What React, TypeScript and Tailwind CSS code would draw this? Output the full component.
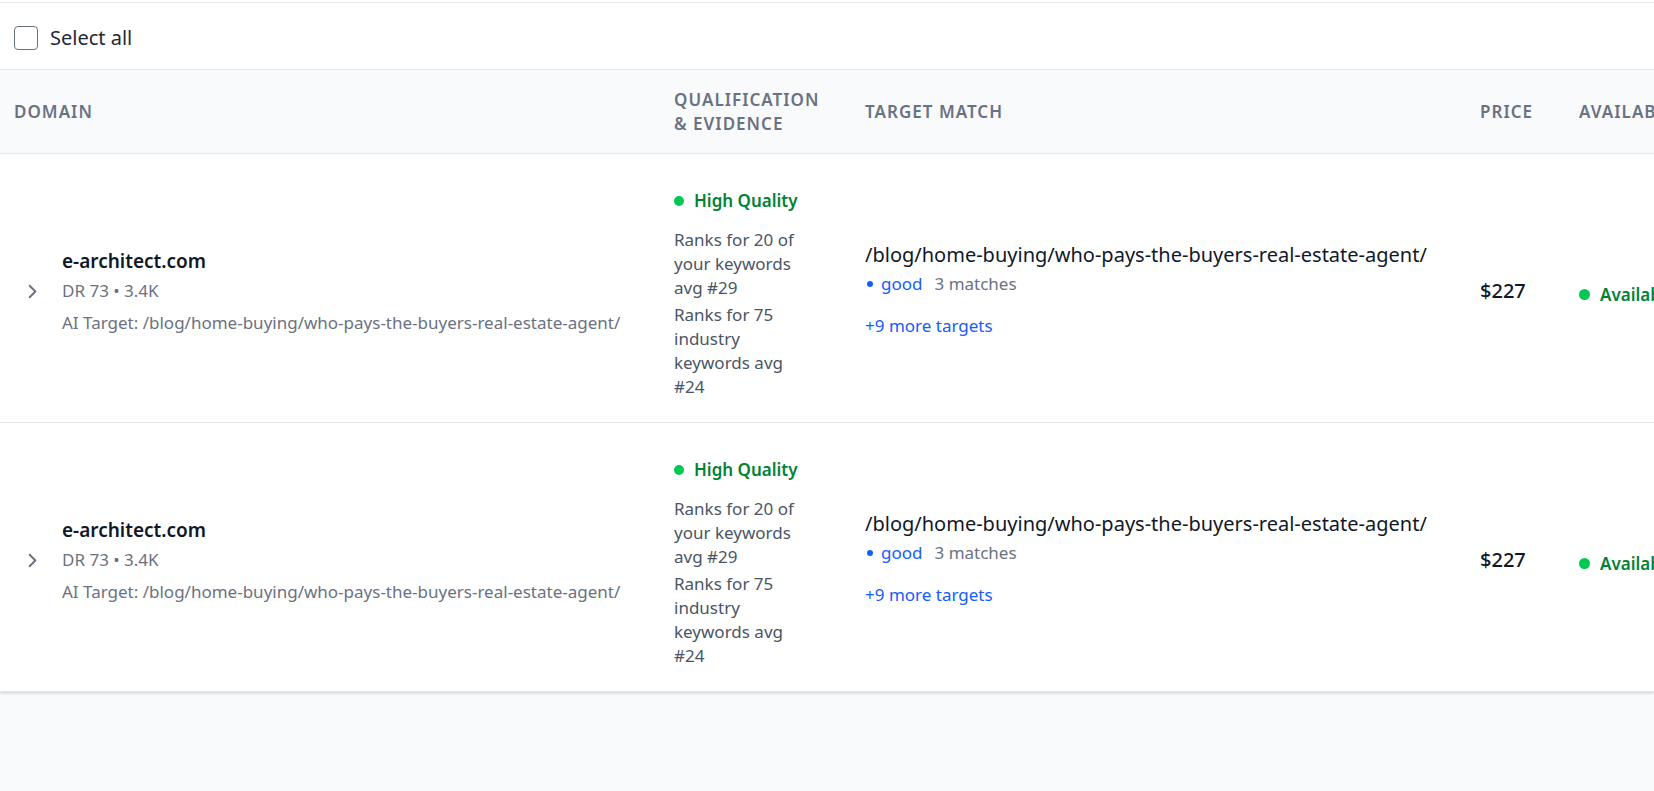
import { ChevronRight } from "lucide-react";

type Row = {
  domain: string;
  dr: number;
  traffic: string;
  aiTarget: string;
  quality: string;
  evidence: string[];
  target: string;
  match: string;
  matches: number;
  more: number;
  price: string;
  status: string;
};

const rows: Row[] = [
  {
    domain: "e-architect.com",
    dr: 73,
    traffic: "3.4K",
    aiTarget: "/blog/home-buying/who-pays-the-buyers-real-estate-agent/",
    quality: "High Quality",
    evidence: ["Ranks for 20 of your keywords avg #29", "Ranks for 75 industry keywords avg #24"],
    target: "/blog/home-buying/who-pays-the-buyers-real-estate-agent/",
    match: "good",
    matches: 3,
    more: 9,
    price: "$227",
    status: "Available",
  },
  {
    domain: "e-architect.com",
    dr: 73,
    traffic: "3.4K",
    aiTarget: "/blog/home-buying/who-pays-the-buyers-real-estate-agent/",
    quality: "High Quality",
    evidence: ["Ranks for 20 of your keywords avg #29", "Ranks for 75 industry keywords avg #24"],
    target: "/blog/home-buying/who-pays-the-buyers-real-estate-agent/",
    match: "good",
    matches: 3,
    more: 9,
    price: "$227",
    status: "Available",
  },
];

function DomainRow({ row }: { row: Row }) {
  return (
    <div className="flex border-b border-gray-200">
      <div className="flex w-[660px] shrink-0 items-center pl-[21px] pt-[6px]">
        <ChevronRight size={23} strokeWidth={2} className="shrink-0 text-gray-500" />
        <div className="ml-[18px]">
          <div className="text-[19px] font-semibold leading-[28px] text-gray-900">{row.domain}</div>
          <div className="mt-1 text-[17px] leading-6 text-gray-500">
            DR {row.dr} • {row.traffic}
          </div>
          <div className="mt-2 text-[17px] leading-6 text-gray-500">AI Target: {row.aiTarget}</div>
        </div>
      </div>

      <div className="w-[191px] shrink-0 pb-[23px] pl-3.5 pt-[35px]">
        <div className="flex items-center gap-[10px] leading-6">
          <span className="h-[10px] w-[10px] rounded-full bg-[#00c853]" />
          <span className="text-[17px] font-semibold text-green-700">{row.quality}</span>
        </div>
        <div className="mt-[15px] w-[132px]">
          {row.evidence.map((line, i) => (
            <p key={i} className={i > 0 ? "mt-[3px] text-[17px] leading-6 text-gray-600" : "text-[17px] leading-6 text-gray-600"}>
              {line}
            </p>
          ))}
        </div>
      </div>

      <div className="flex w-[615px] shrink-0 items-center pl-3.5 pt-[3px]">
        <div>
          <div className="text-[20px] leading-[28px] text-gray-900">{row.target}</div>
          <div className="mt-[3px] flex items-center text-[17px] leading-6">
            <span className="ml-[2px] h-[6px] w-[6px] rounded-full bg-blue-600" />
            <span className="ml-[8px] text-blue-600">{row.match}</span>
            <span className="ml-[12px] text-gray-500">{row.matches} matches</span>
          </div>
          <div className="mt-[18px] text-[17px] leading-6 text-blue-600">+{row.more} more targets</div>
        </div>
      </div>

      <div className="flex w-[99px] shrink-0 items-center pl-3.5 pt-[6px]">
        <span className="text-[20px] font-medium text-gray-900">{row.price}</span>
      </div>

      <div className="flex w-[200px] shrink-0 items-center gap-[10px] pl-3.5 pt-[13px]">
        <span className="h-[11px] w-[11px] shrink-0 rounded-full bg-[#00c853]" />
        <span className="text-[17px] font-semibold text-green-700">{row.status}</span>
      </div>
    </div>
  );
}

export default function App() {
  return (
    <main className="min-h-screen bg-gray-50 font-['Noto_Sans',sans-serif]">
      <div className="overflow-hidden bg-white shadow-[0_1px_3px_rgba(0,0,0,0.18)]">
        <div className="h-[3px] border-b border-gray-200" />

        <label className="flex h-[66px] items-center gap-3 px-3.5 pt-[3px]">
          <span className="h-[24px] w-[24px] rounded-[4px] border-[1.5px] border-gray-500" />
          <span className="text-[20px] text-gray-800">Select all</span>
        </label>

        <div className="flex h-[85px] items-center border-y border-gray-200 bg-gray-50 text-[17px] font-semibold uppercase leading-6 tracking-[0.06em] text-gray-500">
          <div className="w-[660px] shrink-0 pl-3.5">Domain</div>
          <div className="w-[191px] shrink-0 pl-3.5">
            Qualification
            <br />& Evidence
          </div>
          <div className="w-[615px] shrink-0 pl-3.5">Target Match</div>
          <div className="w-[99px] shrink-0 pl-3.5">Price</div>
          <div className="w-[200px] shrink-0 pl-3.5">Availability</div>
        </div>

        {rows.map((row, i) => (
          <DomainRow key={i} row={row} />
        ))}
      </div>
    </main>
  );
}
